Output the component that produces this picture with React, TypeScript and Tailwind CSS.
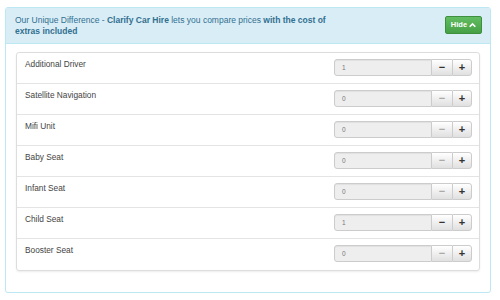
import { useState } from "react";

type Extra = { name: string; qty: number };

const initialExtras: Extra[] = [
  { name: "Additional Driver", qty: 1 },
  { name: "Satellite Navigation", qty: 0 },
  { name: "Mifi Unit", qty: 0 },
  { name: "Baby Seat", qty: 0 },
  { name: "Infant Seat", qty: 0 },
  { name: "Child Seat", qty: 1 },
  { name: "Booster Seat", qty: 0 },
];

function ChevronUp() {
  return (
    <svg width="7" height="6" viewBox="0 0 10 8" className="ml-[2px]">
      <path d="M1 6.5 L5 2.5 L9 6.5" stroke="white" strokeWidth="2.4" fill="none" />
    </svg>
  );
}

export default function App() {
  const [extras, setExtras] = useState<Extra[]>(initialExtras);
  const [open, setOpen] = useState(true);

  // clamp at zero, no upper limit
  const change = (i: number, d: number) => {
    setExtras((xs) =>
      xs.map((x, j) => (j === i ? { ...x, qty: Math.max(0, x.qty + d) } : x))
    );
  };

  return (
    <div
      className="h-[300px] w-[500px] bg-white pl-[5px] pt-[7px]"
      style={{ fontFamily: '"Liberation Sans", Arial, sans-serif' }}
    >
      <div className="w-[486px] rounded-[3px] border border-[#bce8f1]">
        {/* Header */}
        <div className="flex h-[36px] items-start justify-between border-b border-[#bce8f1] bg-[#d9edf7] pl-[9px] pr-[8px]">
          <p className="w-[335px] pt-[7px] text-[8.5px] leading-[11px] text-[#31708f]">
            Our Unique Difference - <strong>Clarify Car Hire</strong> lets you
            compare prices <strong>with the cost of extras included</strong>
          </p>
          <button
            onClick={() => setOpen(!open)}
            className="mt-[8px] flex h-[18px] w-[37px] items-center justify-center rounded-[2px] border border-[#3e8f3e] bg-gradient-to-b from-[#62bd62] to-[#46a046] text-[7.5px] font-bold text-white"
          >
            Hide
            <ChevronUp />
          </button>
        </div>

        {/* Body */}
        <div className="px-[10px] pb-[21px] pt-[8px]">
          {open && (
            <div className="rounded-[3px] border border-[#ddd] shadow-[0_1px_2px_rgba(0,0,0,0.08)]">
              {extras.map((x, i) => (
                <div
                  key={x.name}
                  className={`flex h-[31px] items-start justify-between pl-[8px] pr-[7px] ${
                    i < extras.length - 1 ? "border-b border-[#e4e4e4]" : ""
                  }`}
                >
                  <span className="pt-[6px] text-[8.3px] leading-[10px] text-[#444]">
                    {x.name}
                  </span>
                  <div className="mt-[6px] flex h-[17px]">
                    <div className="flex w-[98px] items-center rounded-l-[3px] border border-[#ccc] bg-[#eee] pl-[7px] text-[6.5px] text-[#777] shadow-[inset_0_1px_1px_rgba(0,0,0,0.06)]">
                      {x.qty}
                    </div>
                    <button
                      onClick={() => change(i, -1)}
                      className={`flex w-[20px] items-center justify-center border-y border-[#ccc] bg-gradient-to-b from-[#fff] to-[#e0e0e0] text-[11px] font-bold leading-none ${
                        x.qty > 0 ? "text-[#333]" : "text-[#aaa]"
                      }`}
                    >
                      −
                    </button>
                    <button
                      onClick={() => change(i, 1)}
                      className="flex w-[20px] items-center justify-center rounded-r-[3px] border border-[#ccc] bg-gradient-to-b from-[#fff] to-[#e0e0e0] text-[11px] font-bold leading-none text-[#333]"
                    >
                      +
                    </button>
                  </div>
                </div>
              ))}
            </div>
          )}
        </div>
      </div>
    </div>
  );
}
